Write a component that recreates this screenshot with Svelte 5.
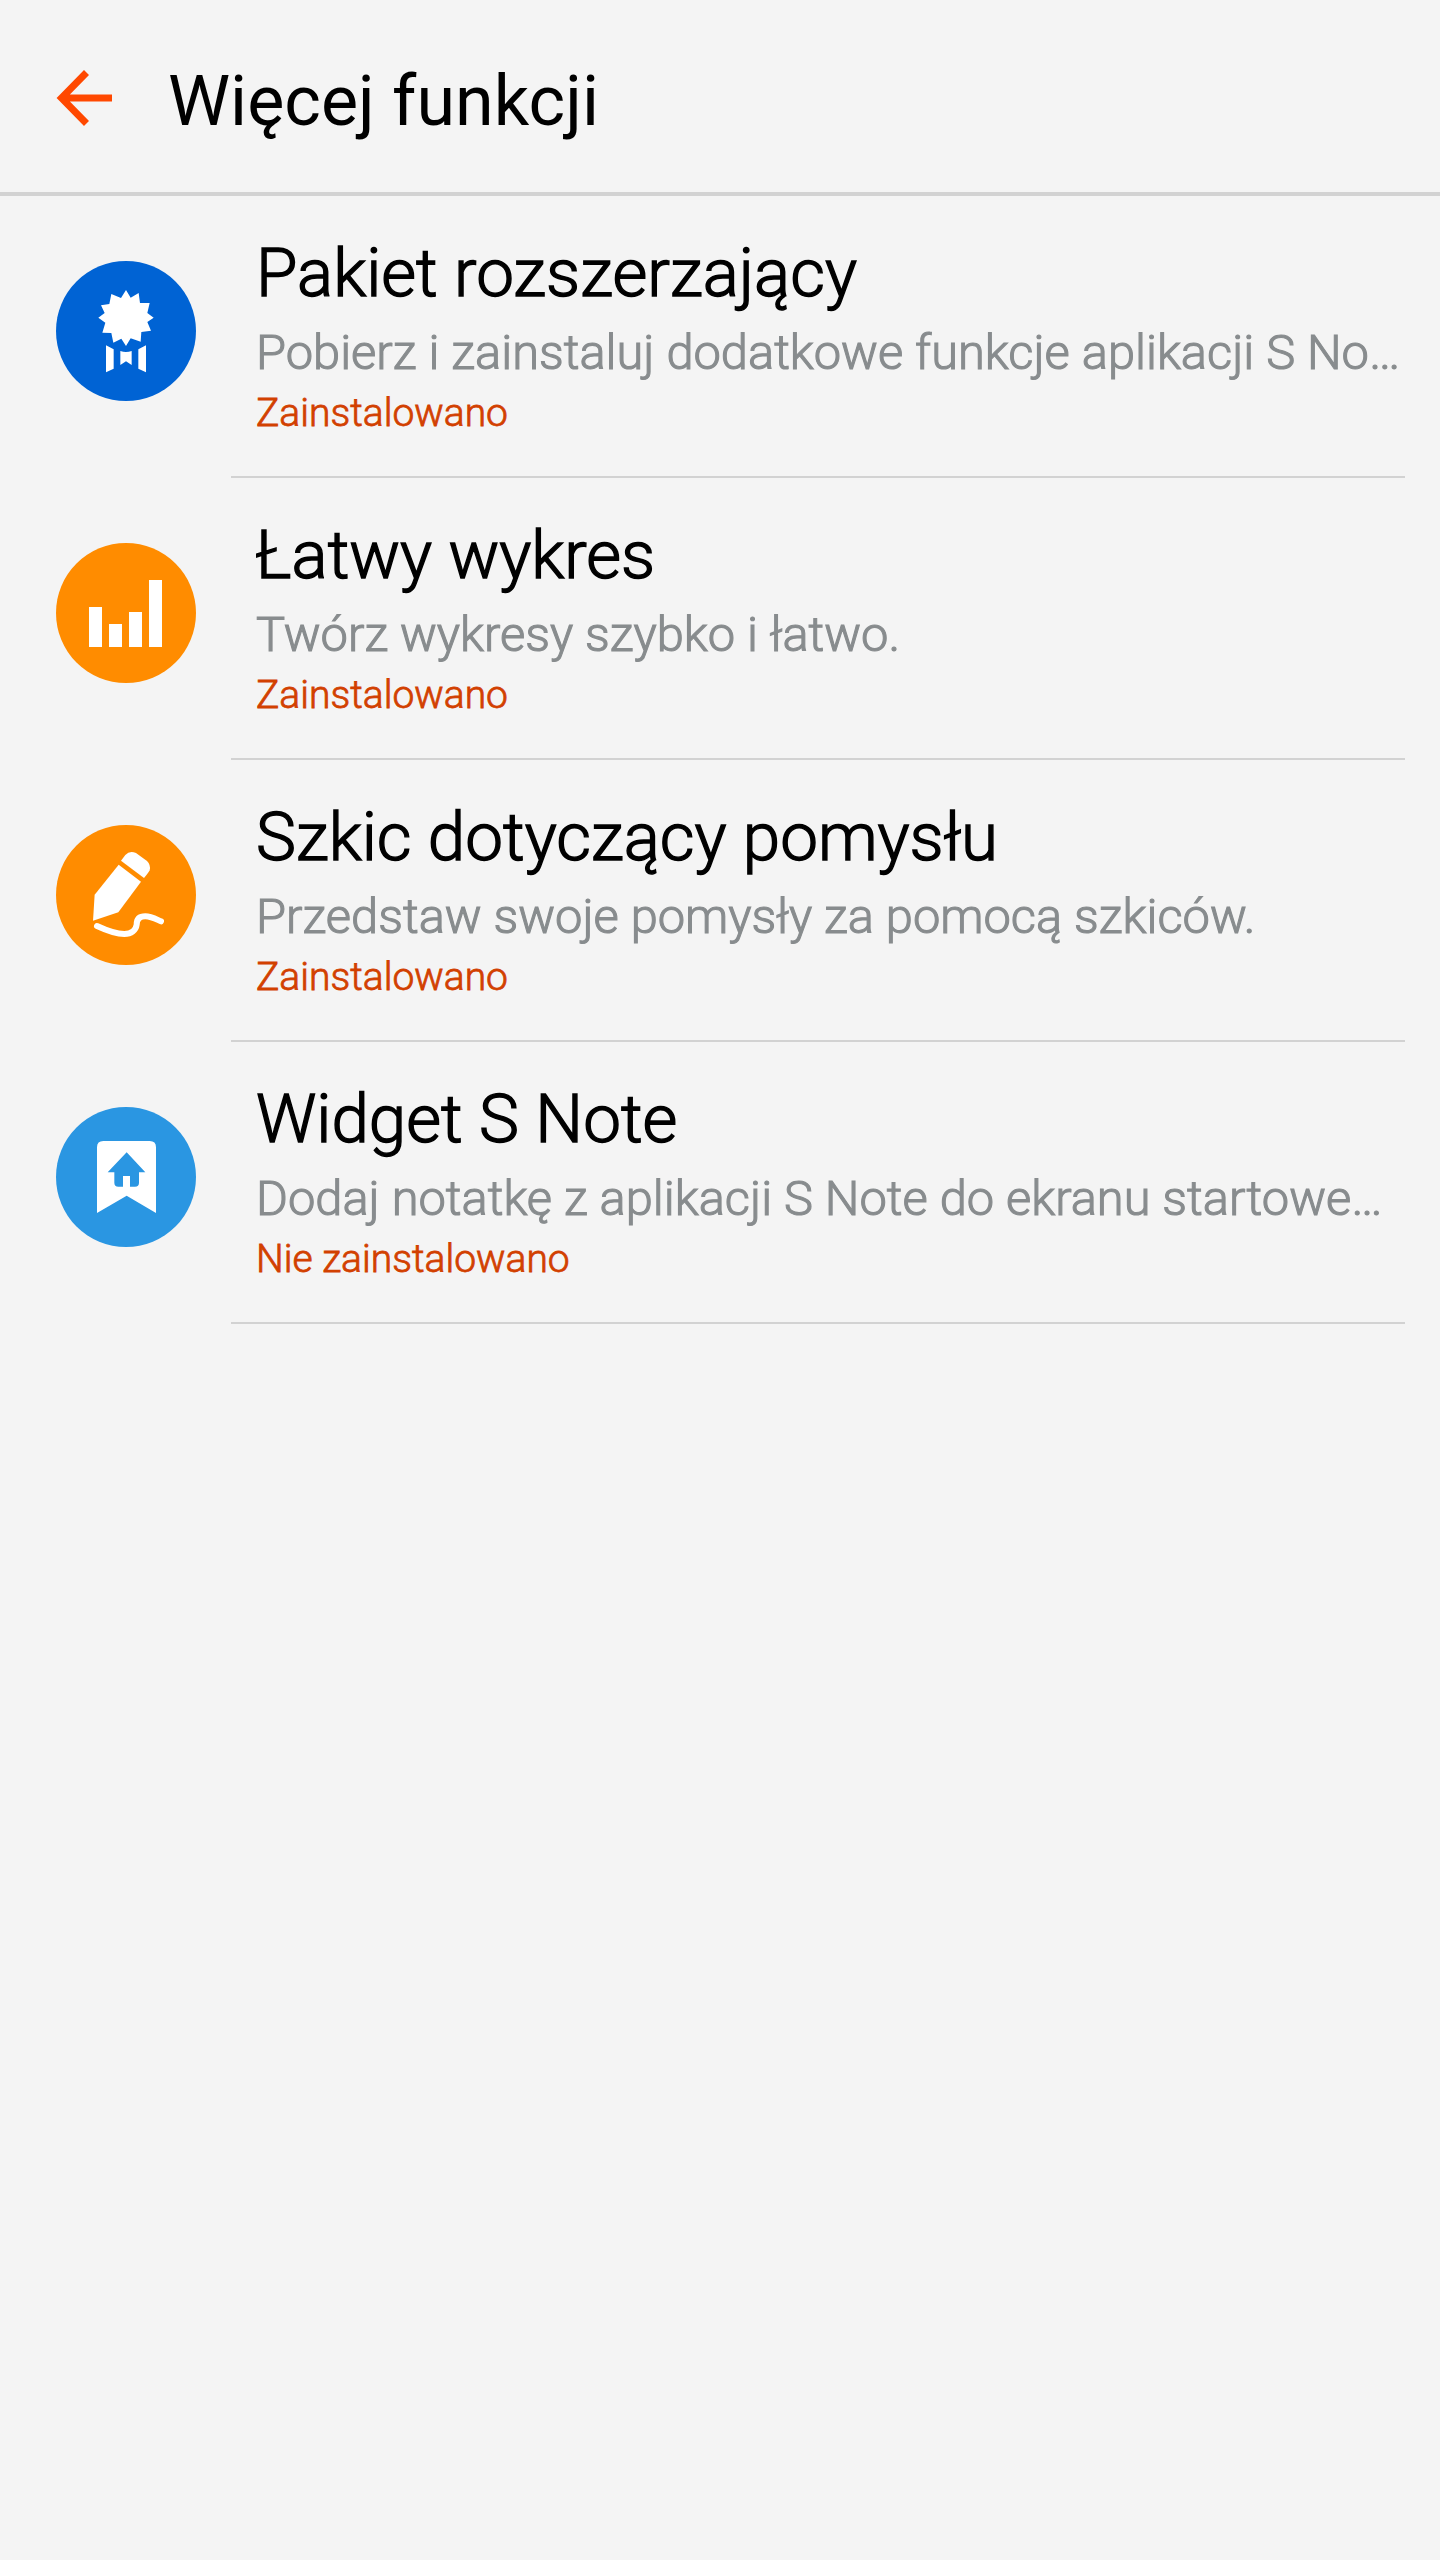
<script>
  const items = [
    { icon: 'badge', box: '48 48 420 420', title: 'Pakiet rozszerzający', text: 'Pobierz i zainstaluj dodatkowe funkcje aplikacji S No…', status: 'Zainstalowano' },
    { icon: 'chart', box: '48 39 420 420', title: 'Łatwy wykres', text: 'Twórz wykresy szybko i łatwo.', status: 'Zainstalowano' },
    { icon: 'sketch', box: '48 45 420 420', title: 'Szkic dotyczący pomysłu', text: 'Przedstaw swoje pomysły za pomocą szkiców.', status: 'Zainstalowano' },
    { icon: 'widget', box: '48 51 420 420', title: 'Widget S Note', text: 'Dodaj notatkę z aplikacji S Note do ekranu startowe…', status: 'Nie zainstalowano' }
  ];
</script>

<div class="screen">
  <header>
    <svg class="back" viewBox="0 0 56 56" aria-hidden="true">
      <path d="M30.5 2.5 L5.5 28 L30.5 53.5 M6 28 H56" />
    </svg>
    <h1>Więcej funkcji</h1>
  </header>

  <ul>
    {#each items as item}
      <li>
        <svg class="icon {item.icon}" viewBox={item.box} aria-hidden="true">
          {#if item.icon === 'badge'}
            <path d="M258 135 L272 158 L296 144 L300 174 L329 174 L322 204 L341 218 L322 231 L333 257 L304 261 L302 290 L272 280 L258 303 L244 281 L220 293 L214 264 L187 263 L196 233 L175 218 L194 204 L183 181 L208 177 L214 147 L243 159 Z" />
            <path d="M198 301 L221 313 V371 L198 382 Z M318 301 L295 313 V371 L318 382 Z" />
            <path d="M241 318 Q258 324 275 318 V360 L258 349 L241 360 Z" />
          {:else if item.icon === 'chart'}
            <path d="M147 231 H186 V351 H147 Z M207 282 H246 V351 H207 Z M267 246 H306 V351 H267 Z M327 150 H366 V351 H327 Z" />
          {:else if item.icon === 'sketch'}
            <path d="M243 152 L256 135 Q269 120 288 129 L321 153 Q333 165 329 181 Q326 188 312 204 Z" />
            <path d="M236 164 L303 215 L235 307 L159 332 L164 254 Z" />
            <path class="stroke" d="M171 348 C199 361 226 372 253 372 C274 372 288 360 290 344 C290 326 300 319 316 319 C333 319 347 327 363 334" />
          {:else}
            <path fill-rule="evenodd" d="M190 153 H329 Q348 153 348 172 V369 L260 317 L171 369 V172 Q171 153 190 153 Z M260 187 L203 247 H223 V278 Q223 290 235 290 H249 V258 H270 V290 H285 Q297 290 297 278 V247 H316 Z" />
          {/if}
        </svg>
        <div class="body">
          <h2>{item.title}</h2>
          <p class="text">{item.text}</p>
          <p class="status">{item.status}</p>
        </div>
      </li>
    {/each}
  </ul>
</div>

<style>
  :global(body) { background: #f4f4f4; }
  .screen {
    width: 1440px;
    min-height: 2560px;
    background: #f4f4f4;
    font-family: Roboto, sans-serif;
    overflow: hidden;
  }
  h1, h2, p, ul { margin: 0; padding: 0; font-weight: 400; }
  header {
    box-sizing: border-box;
    height: 196px;
    padding: 10px 0 0 56px;
    border-bottom: 4px solid #d2d2d2;
    display: flex;
    align-items: center;
    gap: 56px;
  }
  .back { width: 56px; height: 56px; margin-top: -6px; overflow: visible; }
  .back path { fill: none; stroke: #ff4800; stroke-width: 7; }
  h1 { font-size: 70px; line-height: 82px; color: #000; white-space: nowrap; }
  ul { list-style: none; }
  li { display: flex; height: 282px; padding-left: 56px; }
  .icon { flex: none; width: 140px; height: 140px; margin-top: 65px; border-radius: 50%; fill: #fff; }
  .badge { background: #0063d4; }
  .chart, .sketch { background: #ff8c00; }
  .widget { background: #2a96e2; }
  .stroke { fill: none; stroke: #fff; stroke-width: 18; stroke-linecap: round; }
  .body {
    box-sizing: border-box;
    width: 1174px;
    margin-left: 35px;
    padding: 37px 0 0 25px;
    border-bottom: 2px solid #d2d2d2;
    white-space: nowrap;
  }
  /* light face with a hairline stroke: a weight between light and regular */
  h2, .text, .status { font-weight: 300; -webkit-text-stroke: 1.1px currentColor; }
  h2 { font-size: 67.3px; line-height: 80px; color: #000; -webkit-text-stroke-width: 1.4px; }
  .text { margin-top: 11px; font-size: 48.8px; line-height: 58px; color: #888c8e; }
  .status { margin-top: 8px; font-size: 39px; line-height: 47px; color: #d24000; -webkit-text-stroke-width: 0.8px; }
</style>
